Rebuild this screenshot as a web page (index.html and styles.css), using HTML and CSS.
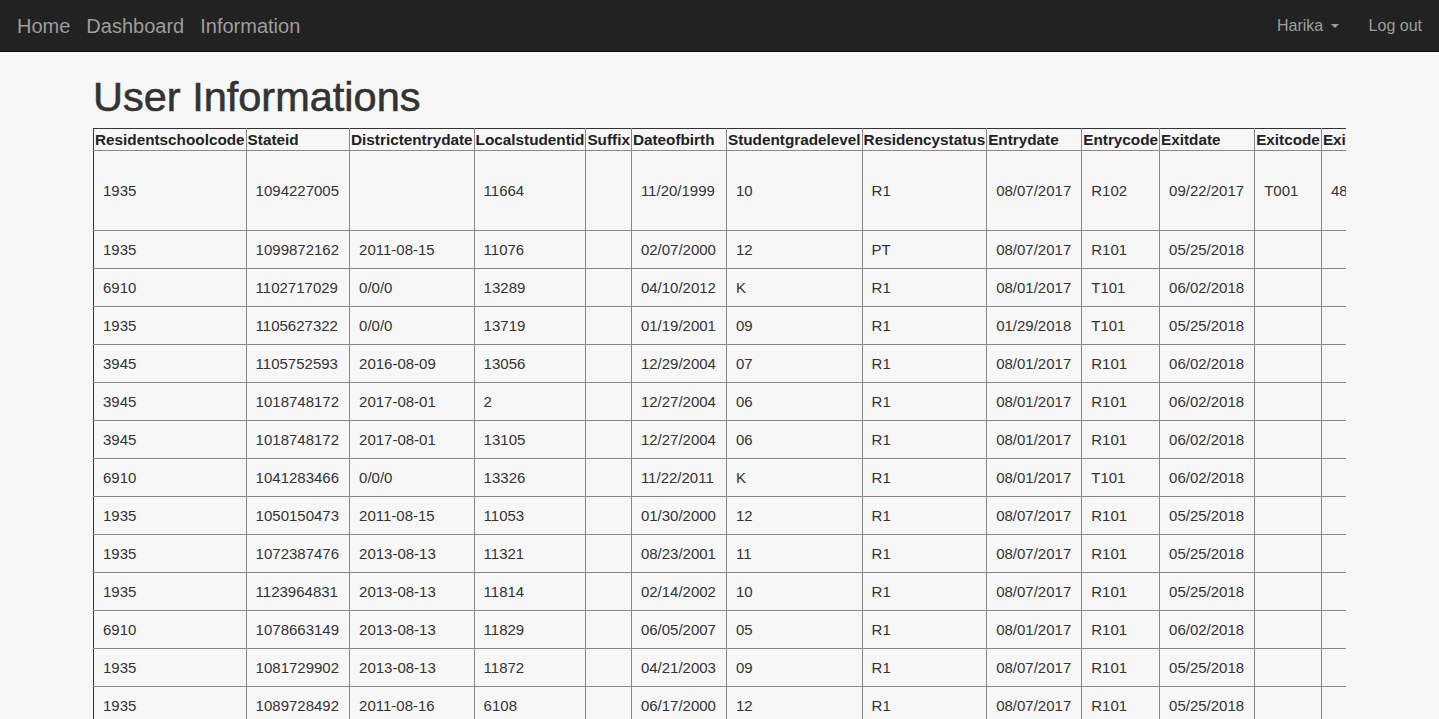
FILE: index.html
```html
<!DOCTYPE html>
<html lang="en">
<head>
<meta charset="utf-8">
<title>User Informations</title>
<link rel="stylesheet" href="styles.css">
</head>
<body>
<nav class="navbar">
  <div class="nav-left">
    <a class="nav-link big" href="#">Home</a>
    <a class="nav-link big" href="#">Dashboard</a>
    <a class="nav-link big" href="#">Information</a>
  </div>
  <div class="nav-right">
    <a class="nav-link" href="#">Harika <span class="caret"></span></a>
    <a class="nav-link" href="#">Log out</a>
  </div>
</nav>
<main class="container">
  <h1 class="title">User Informations</h1>
  <div class="table-wrap">
    <table class="data">
      <thead>
        <tr>
          <th>Residentschoolcode</th><th>Stateid</th><th>Districtentrydate</th><th>Localstudentid</th><th>Suffix</th><th>Dateofbirth</th><th>Studentgradelevel</th><th>Residencystatus</th><th>Entrydate</th><th>Entrycode</th><th>Exitdate</th><th>Exitcode</th><th>Exitcomment</th><th>Schoolyear</th>
        </tr>
      </thead>
      <tbody>
        <tr class="tall"><td>1935</td><td>1094227005</td><td></td><td>11664</td><td></td><td>11/20/1999</td><td>10</td><td>R1</td><td>08/07/2017</td><td>R102</td><td>09/22/2017</td><td>T001</td><td>4801</td><td>2017</td></tr>
        <tr><td>1935</td><td>1099872162</td><td>2011-08-15</td><td>11076</td><td></td><td>02/07/2000</td><td>12</td><td>PT</td><td>08/07/2017</td><td>R101</td><td>05/25/2018</td><td></td><td></td><td>2017</td></tr>
        <tr><td>6910</td><td>1102717029</td><td>0/0/0</td><td>13289</td><td></td><td>04/10/2012</td><td>K</td><td>R1</td><td>08/01/2017</td><td>T101</td><td>06/02/2018</td><td></td><td></td><td>2017</td></tr>
        <tr><td>1935</td><td>1105627322</td><td>0/0/0</td><td>13719</td><td></td><td>01/19/2001</td><td>09</td><td>R1</td><td>01/29/2018</td><td>T101</td><td>05/25/2018</td><td></td><td></td><td>2017</td></tr>
        <tr><td>3945</td><td>1105752593</td><td>2016-08-09</td><td>13056</td><td></td><td>12/29/2004</td><td>07</td><td>R1</td><td>08/01/2017</td><td>R101</td><td>06/02/2018</td><td></td><td></td><td>2017</td></tr>
        <tr><td>3945</td><td>1018748172</td><td>2017-08-01</td><td>2</td><td></td><td>12/27/2004</td><td>06</td><td>R1</td><td>08/01/2017</td><td>R101</td><td>06/02/2018</td><td></td><td></td><td>2017</td></tr>
        <tr><td>3945</td><td>1018748172</td><td>2017-08-01</td><td>13105</td><td></td><td>12/27/2004</td><td>06</td><td>R1</td><td>08/01/2017</td><td>R101</td><td>06/02/2018</td><td></td><td></td><td>2017</td></tr>
        <tr><td>6910</td><td>1041283466</td><td>0/0/0</td><td>13326</td><td></td><td>11/22/2011</td><td>K</td><td>R1</td><td>08/01/2017</td><td>T101</td><td>06/02/2018</td><td></td><td></td><td>2017</td></tr>
        <tr><td>1935</td><td>1050150473</td><td>2011-08-15</td><td>11053</td><td></td><td>01/30/2000</td><td>12</td><td>R1</td><td>08/07/2017</td><td>R101</td><td>05/25/2018</td><td></td><td></td><td>2017</td></tr>
        <tr><td>1935</td><td>1072387476</td><td>2013-08-13</td><td>11321</td><td></td><td>08/23/2001</td><td>11</td><td>R1</td><td>08/07/2017</td><td>R101</td><td>05/25/2018</td><td></td><td></td><td>2017</td></tr>
        <tr><td>1935</td><td>1123964831</td><td>2013-08-13</td><td>11814</td><td></td><td>02/14/2002</td><td>10</td><td>R1</td><td>08/07/2017</td><td>R101</td><td>05/25/2018</td><td></td><td></td><td>2017</td></tr>
        <tr><td>6910</td><td>1078663149</td><td>2013-08-13</td><td>11829</td><td></td><td>06/05/2007</td><td>05</td><td>R1</td><td>08/01/2017</td><td>R101</td><td>06/02/2018</td><td></td><td></td><td>2017</td></tr>
        <tr><td>1935</td><td>1081729902</td><td>2013-08-13</td><td>11872</td><td></td><td>04/21/2003</td><td>09</td><td>R1</td><td>08/07/2017</td><td>R101</td><td>05/25/2018</td><td></td><td></td><td>2017</td></tr>
        <tr><td>1935</td><td>1089728492</td><td>2011-08-16</td><td>6108</td><td></td><td>06/17/2000</td><td>12</td><td>R1</td><td>08/07/2017</td><td>R101</td><td>05/25/2018</td><td></td><td></td><td>2017</td></tr>
        <tr><td>1935</td><td>1090117283</td><td>2012-08-14</td><td>11590</td><td></td><td>03/11/2002</td><td>10</td><td>R1</td><td>08/07/2017</td><td>R101</td><td>05/25/2018</td><td></td><td></td><td>2017</td></tr>
      </tbody>
    </table>
  </div>
</main>
</body>
</html>
```

FILE: styles.css
```css
* { box-sizing: border-box; }

html, body {
  margin: 0;
  padding: 0;
  background: #f7f7f7;
  color: #333;
  font-family: "Liberation Sans", Arial, sans-serif;
  overflow: hidden;
}

.navbar {
  height: 52px;
  background: #222;
  border-bottom: 1px solid #080808;
  display: flex;
  align-items: center;
  justify-content: space-between;
  padding: 0 9px 0 9px;
}

.nav-left, .nav-right {
  display: flex;
  align-items: center;
}

.nav-link {
  color: #9d9d9d;
  text-decoration: none;
  font-size: 16px;
  padding: 0 8px;
  line-height: 48px;
}

.nav-link.big {
  font-size: 20px;
}

.nav-right .nav-link + .nav-link {
  margin-left: 14px;
}

.caret {
  display: inline-block;
  width: 0;
  height: 0;
  margin-left: 3px;
  vertical-align: middle;
  border-top: 4px solid #9d9d9d;
  border-left: 4px solid transparent;
  border-right: 4px solid transparent;
}

.container {
  padding: 0 93px;
}

.title {
  font-size: 41.5px;
  font-weight: 500;
  line-height: 44px;
  margin: 23px 0 9px;
  color: #333;
  -webkit-text-stroke: 0.6px #333;
}

.table-wrap {
  overflow: hidden;
  width: 100%;
}

.data {
  border-collapse: collapse;
  white-space: nowrap;
  font-size: 15px;
  line-height: 21px;
}

.data th {
  text-align: left;
  font-weight: bold;
  font-size: 15.3px;
  color: #222;
  padding: 0 1px;
  border: 1px solid #888;
  border-top: 1px solid #333;
}

.data td {
  padding: 8px 10px 8px 9px;
  border: 1px solid #888;
  vertical-align: middle;
}

.data th:first-child,
.data td:first-child {
  border-left: 1px solid #333;
}

.data tr.tall td {
  height: 80px;
}
```
